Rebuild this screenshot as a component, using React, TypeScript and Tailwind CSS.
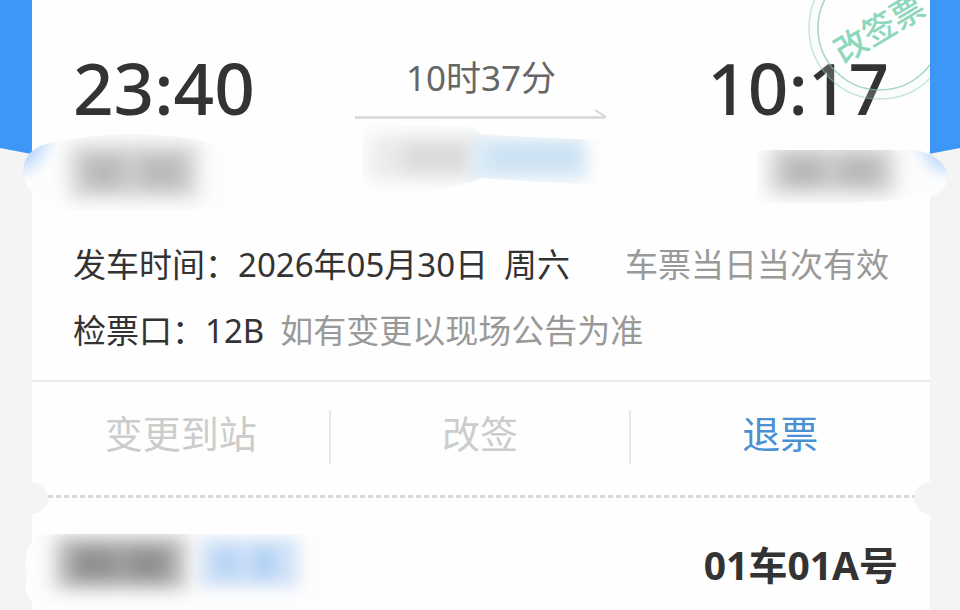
import { clsx } from 'clsx';

const actions = [
  { label: '变更到站', enabled: false },
  { label: '改签', enabled: false },
  { label: '退票', enabled: true },
];

function Stamp() {
  return (
    <svg className="absolute top-0 right-0 w-[124px] h-[102px]" viewBox="0 0 124 102">
      <circle cx="74" cy="28" r="66.5" fill="none" stroke="#effaf6" strokeWidth="8" strokeOpacity="0.2" />
      <circle cx="74" cy="28" r="71" fill="none" stroke="#8fcfb5" strokeOpacity="0.5" strokeWidth="1.5" />
      <circle cx="74" cy="28" r="62" fill="none" stroke="#7fc4a8" strokeOpacity="0.7" strokeWidth="1.5" />
      <text
        x="73"
        y="40"
        textAnchor="middle"
        transform="rotate(-31 74 28)"
        className="text-[33px] font-medium"
        fill="#8dd8bc"
      >
        改签票
      </text>
    </svg>
  );
}

function Arrow() {
  return (
    <svg className="w-[252px] h-4" viewBox="0 0 252 16" fill="none" stroke="#d6d6d6">
      <path d="M0 13.5H250" strokeWidth="2.5" />
      <path d="M240 6L251 13" strokeWidth="2" />
    </svg>
  );
}

function BlurFilters() {
  return (
    <svg className="absolute size-0" aria-hidden="true">
      <defs>
        <filter id="soft" filterUnits="userSpaceOnUse" x="-60" y="-60" width="440" height="200">
          <feGaussianBlur stdDeviation="10 9" />
        </filter>
        <filter id="edge" filterUnits="userSpaceOnUse" x="-60" y="-60" width="440" height="200">
          <feGaussianBlur stdDeviation="8" />
        </filter>
      </defs>
    </svg>
  );
}

// Masked station names, train number and passenger
function LeftMask() {
  return (
    <svg className="absolute left-[-10px] top-[132px] w-[220px] h-[78px]" viewBox="0 0 220 78">
      <defs>
        <clipPath id="leftShape">
          <path d="M1 38C2 24 12 14 28 11C60 4 85 2 115 2C150 3 185 7 205 18V78H40C14 68 2 56 1 38Z" />
        </clipPath>
      </defs>
      <g clipPath="url(#leftShape)">
        <rect width="220" height="78" fill="#fdfdfd" />
        <path d="M-20 -10H30L20 24L6 38H-20Z" fill="#bad8fb" filter="url(#edge)" />
        <g filter="url(#soft)">
          <rect x="48" y="12" width="128" height="54" fill="#d4d4d4" />
          <rect x="62" y="24" width="40" height="32" fill="#b8b8b8" />
          <rect x="116" y="24" width="46" height="32" fill="#bababa" />
        </g>
      </g>
    </svg>
  );
}

function RightMask() {
  return (
    <svg className="absolute right-[-19px] top-[148px] w-[200px] h-[58px]" viewBox="0 0 200 58">
      <defs>
        <clipPath id="rightShape">
          <path d="M8 2H165C182 4 196 14 199 26C199 38 192 48 176 49C120 56 60 56 8 55Z" />
        </clipPath>
      </defs>
      <g clipPath="url(#rightShape)">
        <rect width="200" height="58" fill="#fdfdfd" />
        <path d="M162 -16H220V22H186Z" fill="#bad8fb" filter="url(#edge)" />
        <g filter="url(#soft)">
          <rect x="20" y="-2" width="126" height="48" fill="#d4d4d4" />
          <rect x="34" y="8" width="42" height="30" fill="#b6b6b6" />
          <rect x="88" y="8" width="44" height="30" fill="#b8b8b8" />
        </g>
      </g>
    </svg>
  );
}

function TrainMask() {
  return (
    <svg className="w-[260px] h-[76px]" viewBox="0 0 260 76">
      <defs>
        <clipPath id="trainShape">
          <path d="M11 2L121 5C125 6 128 12 131 12C170 15 210 17 256 18V63L190 60L130 56C126 58 122 60 116 61C96 67 76 71 53 72H11Z" />
        </clipPath>
      </defs>
      <g clipPath="url(#trainShape)">
        <g filter="url(#soft)">
          <rect x="18" y="12" width="116" height="46" fill="#ebebeb" />
          <rect x="52" y="20" width="66" height="32" fill="#dadada" />
        </g>
        <g filter="url(#edge)">
          <rect x="122" y="16" width="114" height="42" fill="#d9eaf7" />
          <rect x="140" y="20" width="90" height="28" fill="#cce2f3" />
        </g>
      </g>
    </svg>
  );
}

function PassengerMask() {
  return (
    <svg className="absolute left-[-10px] top-[34px] w-[320px] h-[78px]" viewBox="0 0 320 78">
      <defs>
        <clipPath id="passengerShape">
          <path d="M24 1H300V74H24C4 70 1 56 5 42C1 26 4 4 24 1Z" />
        </clipPath>
      </defs>
      <g clipPath="url(#passengerShape)">
        <rect width="320" height="78" fill="#fdfdfd" />
        <g filter="url(#soft)">
          <rect x="34" y="4" width="130" height="52" fill="#bababa" />
          <rect x="50" y="14" width="46" height="34" fill="#8f8f8f" />
          <rect x="102" y="14" width="46" height="34" fill="#8f8f8f" />
        </g>
        <g filter="url(#edge)">
          <rect x="178" y="6" width="98" height="48" fill="#cfe1f8" />
          <rect x="194" y="16" width="22" height="28" fill="#b6d4f5" />
          <rect x="232" y="16" width="20" height="28" fill="#aacdf2" />
        </g>
      </g>
    </svg>
  );
}

export default function App() {
  return (
    <div className="relative h-screen overflow-hidden bg-[#f4f4f4] pl-8 pr-[30px] text-[#333] font-['Noto_Sans','Noto_Sans_CJK_SC',sans-serif]">
      <div className="absolute inset-x-0 top-0 h-60 bg-[#3d97f9] [clip-path:polygon(0_0,100%_0,100%_148px,50%_100%,0_148px)]" />
      <BlurFilters />

      <main className="relative min-h-full bg-[#fefefe]">
        <section className="relative flex items-start justify-between h-[232px] px-[41px] pt-12">
          <LeftMask />
          <RightMask />
          <time className="relative text-[71px] leading-[80px] font-medium">23:40</time>
          <div className="flex flex-col items-center pt-1">
            <span className="text-[35px] leading-[52px] text-[#666]">10时37分</span>
            <Arrow />
            <div className="mt-0.5">
              <TrainMask />
            </div>
          </div>
          <time className="relative text-[71px] leading-[80px] font-medium">10:17</time>
          <Stamp />
        </section>

        <section className="px-[41px] pb-4 text-[33px] leading-[66px]">
          <div className="flex justify-between">
            <p className="flex gap-4">
              <span>发车时间：2026年05月30日</span>
              <span>周六</span>
            </p>
            <p className="text-[#999]">车票当日当次有效</p>
          </div>
          <div className="flex gap-4">
            <p>检票口：12B</p>
            <p className="text-[#999]">如有变更以现场公告为准</p>
          </div>
        </section>

        <section className="grid grid-cols-3 items-center h-[115px] pb-1 border-t-2 border-[#ebebeb]">
          {actions.map((action, i) => (
            <button
              key={action.label}
              disabled={!action.enabled}
              className={clsx(
                'h-[54px] pb-2 text-[38px] leading-[46px]',
                i < actions.length - 1 && 'border-r-2 border-[#e8e8e8]',
                action.enabled ? 'text-[#4a90d2]' : 'text-[#ccc]'
              )}
            >
              {action.label}
            </button>
          ))}
        </section>

        <div className="relative h-1">
          <div className="mx-4 h-[3px] bg-[repeating-linear-gradient(90deg,#d8d8d8_0_5px,transparent_5px_8px)]" />
          <span className="absolute -left-4 top-[-13px] size-8 rounded-full bg-[#f4f4f4]" />
          <span className="absolute -right-4 top-[-13px] size-8 rounded-full bg-[#f4f4f4]" />
        </div>

        <section className="relative flex justify-end px-8 pt-9">
          <PassengerMask />
          <p className="relative text-[39px] leading-[60px] font-bold">01车01A号</p>
        </section>
      </main>
    </div>
  );
}
